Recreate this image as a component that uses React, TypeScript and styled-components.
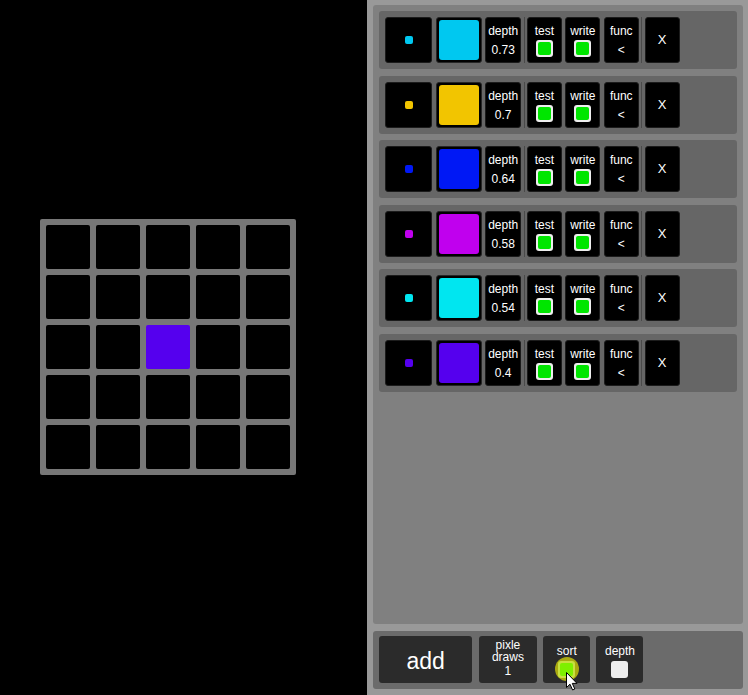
import React from "react";
import styled, { createGlobalStyle } from "styled-components";

const Global = createGlobalStyle`
  html, body { margin: 0; padding: 0; background: #000; overflow: hidden; }
  body { font-family: "Liberation Sans", Arial, sans-serif; color: #fff; }
`;

const Page = styled.div`
  display: flex;
  width: 748px;
  height: 695px;
`;

const Stage = styled.div`
  width: 367px;
  flex: none;
  background: #000;
  padding: 219px 0 0 40px;
  box-sizing: border-box;
`;

const Grid = styled.div`
  display: grid;
  grid-template-columns: repeat(5, 44px);
  grid-auto-rows: 44px;
  gap: 6px;
  padding: 6px;
  width: max-content;
  background: #777;
  border-radius: 2px;
`;

const Cell = styled.div<{ $c?: string }>`
  background: ${(p) => p.$c || "#000"};
  border-radius: 2px;
`;

const Panel = styled.div`
  flex: 1;
  background: #999;
  padding: 5px 5px 6px 6px;
  box-sizing: border-box;
  display: flex;
  flex-direction: column;
  gap: 6.7px;
`;

const List = styled.div`
  flex: 1;
  background: #808080;
  border-radius: 3px;
  padding: 6px 6px;
  display: flex;
  flex-direction: column;
  gap: 6.6px;
`;

const Row = styled.div`
  height: 58px;
  box-sizing: border-box;
  background: #666;
  border-radius: 3px;
  padding: 6px;
  display: flex;
  gap: 3.4px;
`;

const Tile = styled.div<{ $w: number }>`
  width: ${(p) => p.$w}px;
  height: 46px;
  flex: none;
  box-sizing: border-box;
  background: #000;
  border: 1px solid #1c1c1c;
  border-radius: 3px;
  display: flex;
  flex-direction: column;
  align-items: center;
  font-size: 12px;
  line-height: 16px;
`;

const CenterTile = styled(Tile)`
  justify-content: center;
`;

const StackTile = styled(Tile)`
  padding-top: 5px;
`;

const SwatchTile = styled(Tile)`
  padding: 2px;
  border-color: #262626;
`;

const Swatch = styled.div<{ $c: string }>`
  flex: 1;
  align-self: stretch;
  background: ${(p) => p.$c};
  border-radius: 3px;
`;

const Dot = styled.div<{ $c: string }>`
  width: 8px;
  height: 8px;
  border-radius: 2px;
  background: ${(p) => p.$c};
`;

const Label = styled.div`
  line-height: 16px;
`;

const Value = styled.div`
  margin-top: 1px;
  line-height: 20px;
`;

const Check = styled.div<{ $on?: boolean; $hover?: boolean }>`
  position: relative;
  margin-top: 1px;
  width: 17px;
  height: 17px;
  box-sizing: border-box;
  border-radius: 3px;
  background: ${(p) => (p.$hover ? "#c8e040" : "#eee")};
  padding: 2px;
  display: flex;
  &::after {
    content: "";
    flex: 1;
    border-radius: 2px;
    background: ${(p) => (p.$on ? (p.$hover ? "#7ef000" : "#00e600") : "transparent")};
  }
`;

const Glow = styled.div`
  position: absolute;
  left: 50%;
  top: 50%;
  width: 24px;
  height: 24px;
  margin: -13px 0 0 -12px;
  border-radius: 50%;
  background: rgba(255, 255, 0, 0.6);
  z-index: 0;
`;

const CheckWrap = styled.div`
  position: relative;
  margin-top: 3px;
  & > ${Check} {
    margin-top: 0;
    position: relative;
    z-index: 1;
  }
`;

const Cursor = styled.svg`
  position: absolute;
  left: 8px;
  top: 11px;
  z-index: 2;
`;

const Sep = styled.div`
  width: 1px;
  height: 46px;
  flex: none;
  margin: 0 -1px;
  background: #4a4a4a;
`;

const XText = styled.div`
  font-size: 13px;
`;

const Bar = styled.div`
  height: 58px;
  flex: none;
  box-sizing: border-box;
  background: #6b6b6b;
  border-radius: 3px;
  padding: 5px 6px;
  display: flex;
  gap: 6.3px;
`;

const Btn = styled.div<{ $w: number }>`
  width: ${(p) => p.$w}px;
  height: 47px;
  flex: none;
  box-sizing: border-box;
  background: #2b2b2b;
  border-radius: 3px;
  display: flex;
  flex-direction: column;
  align-items: center;
  font-size: 12px;
  text-align: center;
`;

const AddBtn = styled(Btn)`
  justify-content: center;
  font-size: 23px;
  line-height: 26px;
  padding-top: 2px;
`;

const DrawsBtn = styled(Btn)`
  padding: 3px 4px 0;
  line-height: 12px;
`;

const DrawsLabel = styled.div`
  width: 40px;
`;

const DrawsValue = styled.div`
  margin-top: 1px;
  line-height: 14px;
`;

const OptBtn = styled(Btn)`
  padding-top: 8px;
  line-height: 14px;
`;

const rows = [
  { c: "#00c8f0", d: "0.73" },
  { c: "#f2c500", d: "0.7" },
  { c: "#0018f5", d: "0.64" },
  { c: "#c000ee", d: "0.58" },
  { c: "#00e6f0", d: "0.54" },
  { c: "#5500ee", d: "0.4" },
];

export default function App() {
  return (
    <>
      <Global />
      <Page>
        <Stage>
          <Grid>
            {Array.from({ length: 25 }, (_, i) => (
              <Cell key={i} $c={i === 12 ? "#5500ee" : undefined} />
            ))}
          </Grid>
        </Stage>
        <Panel>
          <List>
            {rows.map((r, i) => (
              <Row key={i}>
                <CenterTile $w={47.4}>
                  <Dot $c={r.c} />
                </CenterTile>
                <SwatchTile $w={46}>
                  <Swatch $c={r.c} />
                </SwatchTile>
                <StackTile $w={36}>
                  <Label>depth</Label>
                  <Value>{r.d}</Value>
                </StackTile>
                <Sep />
                <StackTile $w={35}>
                  <Label>test</Label>
                  <Check $on />
                </StackTile>
                <StackTile $w={35}>
                  <Label>write</Label>
                  <Check $on />
                </StackTile>
                <StackTile $w={35}>
                  <Label>func</Label>
                  <Value>&lt;</Value>
                </StackTile>
                <Sep />
                <CenterTile $w={35}>
                  <XText>X</XText>
                </CenterTile>
              </Row>
            ))}
          </List>
          <Bar>
            <AddBtn $w={93.3}>add</AddBtn>
            <DrawsBtn $w={58.6}>
              <DrawsLabel>pixle draws</DrawsLabel>
              <DrawsValue>1</DrawsValue>
            </DrawsBtn>
            <OptBtn $w={46.7}>
              <div>sort</div>
              <CheckWrap>
                <Glow />
                <Check $on $hover />
                <Cursor width="12" height="19" viewBox="0 0 12 19">
                  <path
                    d="M0.5 0.5 L0.5 15.5 L4 12.2 L6.6 18 L8.8 17 L6.3 11.4 L11 11.4 Z"
                    fill="#fff"
                    stroke="#000"
                    strokeWidth="1"
                    strokeLinejoin="round"
                  />
                </Cursor>
              </CheckWrap>
            </OptBtn>
            <OptBtn $w={47}>
              <div>depth</div>
              <CheckWrap>
                <Check />
              </CheckWrap>
            </OptBtn>
          </Bar>
        </Panel>
      </Page>
    </>
  );
}
